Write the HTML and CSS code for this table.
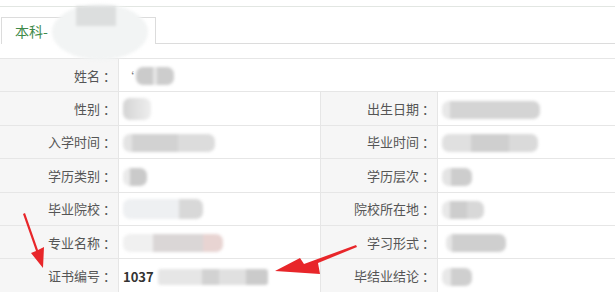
FILE: index.html
```html
<!DOCTYPE html>
<html lang="zh">
<head>
<meta charset="utf-8">
<title>学历信息</title>
<link rel="stylesheet" href="styles.css">
</head>
<body>
<div class="page">
  <div class="panel">
    <div class="tabs">
      <div class="tab">
        <span class="tab-label">本科-</span>
        <span class="smudge smudge-tab"><span class="smudge-core"></span></span>
      </div>
      <div class="tab-rest"></div>
    </div>
    <table class="info">
      <colgroup>
        <col class="c-label"><col class="c-value"><col class="c-label2"><col class="c-value2">
      </colgroup>
      <tr>
        <th>姓名<span class="colon">：</span></th>
        <td colspan="3"><span class="tick">‘</span><span class="blur b-name"></span></td>
      </tr>
      <tr>
        <th>性别<span class="colon">：</span></th>
        <td><span class="blur b-sex"></span></td>
        <th>出生日期<span class="colon">：</span></th>
        <td><span class="blur b-birth"></span></td>
      </tr>
      <tr>
        <th>入学时间<span class="colon">：</span></th>
        <td><span class="blur b-in"></span></td>
        <th>毕业时间<span class="colon">：</span></th>
        <td><span class="blur b-out"></span></td>
      </tr>
      <tr>
        <th>学历类别<span class="colon">：</span></th>
        <td><span class="blur b-type"></span></td>
        <th>学历层次<span class="colon">：</span></th>
        <td><span class="blur b-level"></span></td>
      </tr>
      <tr>
        <th>毕业院校<span class="colon">：</span></th>
        <td><span class="blur b-school"></span></td>
        <th>院校所在地<span class="colon">：</span></th>
        <td><span class="blur b-place"></span></td>
      </tr>
      <tr>
        <th>专业名称<span class="colon">：</span></th>
        <td><span class="blur b-major"></span></td>
        <th>学习形式<span class="colon">：</span></th>
        <td><span class="blur b-form"></span></td>
      </tr>
      <tr>
        <th>证书编号<span class="colon">：</span></th>
        <td><span class="cert">1037</span><span class="blur b-cert"></span></td>
        <th>毕结业结论<span class="colon">：</span></th>
        <td><span class="blur b-result"></span></td>
      </tr>
    </table>
  </div>
  <svg class="arrows" width="615" height="292" viewBox="0 0 615 292" aria-hidden="true">
    <polygon points="23,214 25,213 38,250 44,247 43,268 31,253 36,251" fill="#e8262a"/>
    <polygon points="356,245 357,247 318,263 320,274 275,271 300,258 304,264" fill="#e8262a"/>
  </svg>
</div>
</body>
</html>
```

FILE: styles.css
```css
* { box-sizing: border-box; }

html, body {
  margin: 0;
  padding: 0;
  background: #ffffff;
}

body {
  font-family: "Noto Sans CJK SC", "Microsoft YaHei", sans-serif;
  font-size: 13px;
  color: #555;
}

.page {
  position: relative;
  width: 615px;
  height: 292px;
  overflow: hidden;
}

.panel {
  padding-top: 6px;
}

.tabs {
  display: flex;
  border-top: 1px solid #e2e6e2;
  padding-top: 10px;
  height: 38px;
}

.tab {
  position: relative;
  width: 155px;
  margin-left: 1px;
  border: 1px solid #dcdcdc;
  border-bottom: none;
  background: #fff;
  padding-left: 13px;
  display: flex;
  align-items: center;
}

.tab-label {
  color: #3f8a4a;
  font-size: 14px;
}

.tab-rest {
  flex: 1;
  border-bottom: 1px solid #dcdcdc;
}

.smudge {
  position: absolute;
  display: block;
}

.smudge-tab {
  left: 50px;
  top: -14px;
  width: 96px;
  height: 56px;
  border-radius: 50%;
  background: #f2f4f4;
  filter: blur(1.5px);
}

.smudge-core {
  position: absolute;
  left: 24px;
  top: 2px;
  width: 40px;
  height: 20px;
  background: #dcdede;
}

.info {
  margin-top: 14px;
  margin-left: -1px;
  width: 640px;
  border-collapse: collapse;
  table-layout: fixed;
}

.c-label { width: 119px; }
.c-value { width: 202px; }
.c-label2 { width: 117px; }
.c-value2 { width: 202px; }

.info tr { height: 33.4px; }

.info th,
.info td {
  border: 1px solid #e6e6e6;
  padding: 0;
  white-space: nowrap;
  overflow: hidden;
}

.info th {
  background: #f6f6f6;
  font-weight: normal;
  text-align: right;
  color: #555;
  padding-right: 2px;
}

.colon {
  margin-left: 3px;
}

.info td {
  background: #fff;
  text-align: left;
  padding-left: 4px;
  color: #333;
}

.cert {
  font-weight: bold;
  color: #333;
  margin-right: 4px;
  vertical-align: middle;
}

.tick {
  color: #777;
  font-size: 11px;
  vertical-align: middle;
}

.blur {
  display: inline-block;
  vertical-align: middle;
  height: 18px;
  border-radius: 7px;
  background: #d0d0d0;
  filter: blur(1.4px);
}

.b-name { width: 38px; margin-left: 2px; background: linear-gradient(90deg, #cbcbcb 0 45%, #e6e6e6 45% 55%, #cdcdcd 55%); }
.b-sex { width: 28px; height: 22px; background: linear-gradient(90deg, #d4d4d4, #eeeeee); }
.b-in { width: 92px; background: linear-gradient(90deg, #e4e4e4 0 10%, #d2d2d2 10% 60%, #dcdcdc 60%); }
.b-type { width: 24px; background: linear-gradient(90deg, #eaeaea 0 30%, #cacaca 30%); }
.b-school { width: 80px; height: 20px; background: linear-gradient(90deg, #eef0f2 0 70%, #d8d8d8 70%); }
.b-major { width: 100px; background: linear-gradient(90deg, #f0f0f0 0 30%, #dad6d6 30% 80%, #e8d4d2 80%); }
.b-cert { width: 110px; height: 16px; border-radius: 3px; background: linear-gradient(90deg, #e6e6e6 0 40%, #d2d2d2 40% 55%, #e0e0e0 55% 80%, #cbcbcb 80%); }
.b-birth { width: 98px; background: linear-gradient(90deg, #e8e8e8 0 8%, #d4d4d4 8%); }
.b-out { width: 96px; background: linear-gradient(90deg, #e0e0e0 0 30%, #cfcfcf 30% 70%, #dadada 70%); }
.b-level { width: 30px; background: linear-gradient(90deg, #e4e4e4 0 30%, #cdcdcd 30%); }
.b-place { width: 42px; background: linear-gradient(90deg, #e8e8e8 0 20%, #cdcdcd 20% 60%, #d8d8d8 60%); }
.b-form { width: 60px; margin-left: 4px; background: linear-gradient(90deg, #e6e6e6 0 10%, #cfcfcf 10%); }
.b-result { width: 30px; background: linear-gradient(90deg, #e8e8e8 0 30%, #cfcfcf 30%); }

.arrows {
  position: absolute;
  left: 0;
  top: 0;
  pointer-events: none;
}
```
